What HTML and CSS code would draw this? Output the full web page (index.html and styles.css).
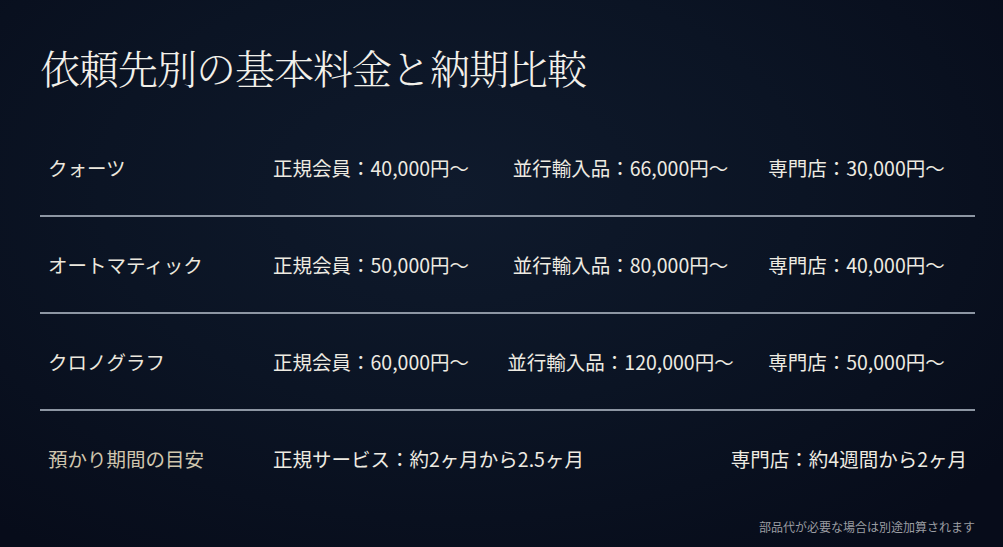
FILE: index.html
```html
<!DOCTYPE html>
<html lang="ja">
<head>
<meta charset="utf-8">
<title>依頼先別の基本料金と納期比較</title>
<link rel="stylesheet" href="styles.css">
</head>
<body>
<main class="page">
  <h1 class="title">依頼先別の基本料金と納期比較</h1>
  <section class="table">
    <div class="row">
      <div class="label">クォーツ</div>
      <div class="cell c1">正規会員：40,000円〜</div>
      <div class="cell c2">並行輸入品：66,000円〜</div>
      <div class="cell c3">専門店：30,000円〜</div>
    </div>
    <div class="row">
      <div class="label">オートマティック</div>
      <div class="cell c1">正規会員：50,000円〜</div>
      <div class="cell c2">並行輸入品：80,000円〜</div>
      <div class="cell c3">専門店：40,000円〜</div>
    </div>
    <div class="row">
      <div class="label">クロノグラフ</div>
      <div class="cell c1">正規会員：60,000円〜</div>
      <div class="cell c2">並行輸入品：120,000円〜</div>
      <div class="cell c3">専門店：50,000円〜</div>
    </div>
    <div class="row last">
      <div class="label muted">預かり期間の目安</div>
      <div class="cell c1 wide">正規サービス：約2ヶ月から2.5ヶ月</div>
      <div class="cell c3 end">専門店：約4週間から2ヶ月</div>
    </div>
  </section>
  <p class="note">部品代が必要な場合は別途加算されます</p>
</main>
</body>
</html>
```
FILE: styles.css
```css
html, body {
  margin: 0;
  height: 100%;
}
body {
  background: radial-gradient(ellipse 70% 80% at 45% 35%, #0f1a2c 0%, #0b1424 50%, #070c1a 100%);
  color: #eeebe2;
  font-family: "Noto Sans CJK JP", "Noto Sans", sans-serif;
  overflow: hidden;
}
.page {
  width: 1003px;
  height: 547px;
  box-sizing: border-box;
  padding: 42px 28px 0 40px;
}
.title {
  margin: 0;
  font-family: "Noto Serif CJK JP", "Liberation Serif", "Noto Sans CJK JP", serif;
  font-weight: 300;
  font-size: 40px;
  line-height: 50px;
  letter-spacing: -1px;
  color: #f2f0ea;
}
.table {
  margin-top: 28px;
  width: 935px;
}
.row {
  display: grid;
  grid-template-columns: 233px 230px 235px 237px;
  align-items: center;
  height: 95px;
  border-bottom: 2px solid #8d96a3;
  font-size: 19.5px;
}
.row.last {
  border-bottom: none;
}
.label {
  padding-left: 8px;
  color: #ece8de;
}
.label.muted {
  color: #d0c6ae;
}
.cell {
  white-space: nowrap;
}
.c1 {
  text-align: left;
}
.c2, .c3 {
  text-align: center;
}
.wide {
  grid-column: 2 / 4;
}
.end {
  justify-self: end;
  padding-right: 8px;
}
.note {
  margin: 13px 0 0;
  width: 935px;
  text-align: right;
  font-size: 12px;
  line-height: 16px;
  color: #9b9da2;
}
```
